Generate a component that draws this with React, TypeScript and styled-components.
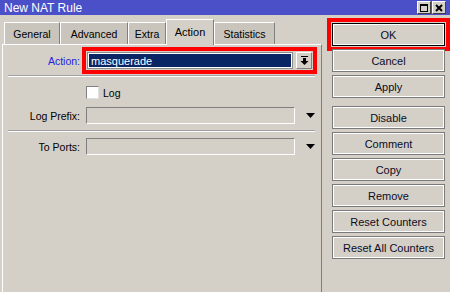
import React from "react";
import styled, { createGlobalStyle } from "styled-components";

const GlobalStyle = createGlobalStyle`
  html, body {
    margin: 0;
    padding: 0;
    background: #d4d0c8;
  }
  body {
    font-family: "Liberation Sans", Arial, sans-serif;
    font-size: 10.5px;
    color: #000;
  }
`;

const Window = styled.div`
  width: 450px;
  height: 292px;
  display: flex;
  flex-direction: column;
  overflow: hidden;
  background: #d4d0c8;
`;

const TitleBar = styled.div`
  height: 15px;
  background: #4b50c8;
  display: flex;
  align-items: center;
  justify-content: space-between;
  padding: 0 4px 0 4px;
`;

const TitleText = styled.span`
  color: #fff;
  font-size: 12px;
`;

const TitleButtons = styled.div`
  display: flex;
  gap: 1px;
  align-self: flex-start;
  margin-top: 1px;
`;

const TitleButton = styled.div`
  width: 12px;
  height: 11px;
  background: #d4d0c8;
  border: 1px solid;
  border-color: #fff #404040 #404040 #fff;
  display: flex;
  align-items: center;
  justify-content: center;
`;

const Body = styled.div`
  flex: 1;
  display: flex;
`;

const LeftColumn = styled.div`
  width: 320px;
  padding-left: 2px;
  display: flex;
  flex-direction: column;
`;

const TabStrip = styled.div`
  height: 29px;
  display: flex;
  align-items: flex-end;
  padding-left: 2px;
  position: relative;
  z-index: 1;
`;

const Tab = styled.div<{ $active?: boolean; $w: number }>`
  width: ${(p) => p.$w}px;
  box-sizing: border-box;
  height: ${(p) => (p.$active ? 26 : 22)}px;
  margin-bottom: ${(p) => (p.$active ? -1 : 0)}px;
  background: ${(p) => (p.$active ? "#d4d0c8" : "#c9c5bd")};
  border-top: 1px solid #fff;
  border-left: 1px solid #fff;
  border-right: 1px solid #808080;
  display: flex;
  align-items: center;
  justify-content: center;
  padding-bottom: ${(p) => (p.$active ? 2 : 0)}px;
  font-size: ${(p) => (p.$active ? 11 : 10.5)}px;
`;

const Panel = styled.div`
  flex: 1;
  border-top: 1px solid #fff;
  border-left: 1px solid #fff;
  border-right: 1px solid #808080;
  display: flex;
  flex-direction: column;
`;

const Row = styled.div<{ $mt: number }>`
  display: grid;
  grid-template-columns: 77px 209px 18px;
  column-gap: 6px;
  align-items: center;
  margin-top: ${(p) => p.$mt}px;
`;

const Label = styled.span<{ $blue?: boolean }>`
  text-align: right;
  color: ${(p) => (p.$blue ? "#2323e0" : "#000")};
  white-space: nowrap;
`;

const Highlight = styled.div`
  grid-column: 2 / span 2;
  width: 227px;
  box-sizing: border-box;
  padding: 1px;
  outline: 4px solid #ff0000;
  display: flex;
  gap: 3px;
`;

const SelectField = styled.div`
  width: 206px;
  height: 17px;
  box-sizing: border-box;
  background: #0a2564;
  border: 1px solid #8c8c8c;
  box-shadow: inset 0 0 0 1px #fff;
  color: #fff;
  display: flex;
  align-items: center;
  padding-left: 3px;
  font-size: 11px;
`;

const DropButton = styled.div`
  width: 16px;
  height: 17px;
  box-sizing: border-box;
  border: 1px solid;
  border-color: #fff #808080 #808080 #fff;
  display: flex;
  align-items: center;
  justify-content: center;
`;

const Input = styled.div`
  height: 17px;
  box-sizing: border-box;
  border: 1px solid;
  border-color: #808080 #fff #fff #808080;
`;

const ArrowCell = styled.div`
  display: flex;
  justify-content: center;
  padding-left: 1px;
`;

const Separator = styled.div<{ $mt: number }>`
  margin: ${(p) => p.$mt}px 0 0 5px;
  width: 307px;
  height: 1px;
  background: #a0a0a0;
  border-bottom: 1px solid #fff;
`;

const CheckLine = styled.label`
  grid-column: 2;
  display: flex;
  align-items: center;
  gap: 4px;
`;

const CheckBox = styled.span`
  width: 13px;
  height: 13px;
  box-sizing: border-box;
  background: #fff;
  border: 1px solid;
  border-color: #808080 #e0e0e0 #e0e0e0 #808080;
`;

const ButtonColumn = styled.div`
  width: 113px;
  padding: 8px 0 0 10px;
  display: flex;
  flex-direction: column;
  gap: 3px;
`;

const Button = styled.div<{ $default?: boolean; $gapBefore?: number }>`
  height: 23px;
  box-sizing: border-box;
  margin-top: ${(p) => p.$gapBefore ?? 0}px;
  border: 1px solid ${(p) => (p.$default ? "#000" : "#7a7a7a")};
  box-shadow: inset 0 0 0 1px #fff;
  display: flex;
  align-items: center;
  justify-content: center;
  outline: ${(p) => (p.$default ? "4px solid #ff0000" : "none")};
  outline-offset: 1px;
  font-size: 11px;
  color: #0c0c24;
`;

const DownTriangle = () => (
  <svg width="9" height="5" viewBox="0 0 9 5">
    <polygon points="0,0 9,0 4.5,5" fill="#000" />
  </svg>
);

const DropIcon = () => (
  <svg width="9" height="9" viewBox="0 0 9 9">
    <rect x="1" y="0" width="7" height="1" fill="#000" />
    <rect x="3" y="2" width="3" height="3" fill="#000" />
    <polygon points="0.5,5 8.5,5 4.5,9" fill="#000" />
  </svg>
);

const tabs = [
  { name: "General", w: 56 },
  { name: "Advanced", w: 68 },
  { name: "Extra", w: 38 },
  { name: "Action", w: 48, active: true },
  { name: "Statistics", w: 61 },
];

const buttons = [
  "Cancel",
  "Apply",
  "Disable",
  "Comment",
  "Copy",
  "Remove",
  "Reset Counters",
  "Reset All Counters",
];

export default function App() {
  return (
    <>
      <GlobalStyle />
      <Window>
        <TitleBar>
          <TitleText>New NAT Rule</TitleText>
          <TitleButtons>
            <TitleButton>
              <svg width="8" height="8" viewBox="0 0 8 8">
                <rect x="0.5" y="0.5" width="7" height="7" fill="none" stroke="#000" />
                <rect x="0" y="0" width="8" height="2" fill="#000" />
              </svg>
            </TitleButton>
            <TitleButton>
              <svg width="8" height="8" viewBox="0 0 8 8">
                <path d="M1 1 L7 7 M7 1 L1 7" stroke="#000" strokeWidth="2" />
              </svg>
            </TitleButton>
          </TitleButtons>
        </TitleBar>
        <Body>
          <LeftColumn>
            <TabStrip>
              {tabs.map((t) => (
                <Tab key={t.name} $w={t.w} $active={t.active}>
                  {t.name}
                </Tab>
              ))}
            </TabStrip>
            <Panel>
              <Row $mt={6}>
                <Label $blue>Action:</Label>
                <Highlight>
                  <SelectField>masquerade</SelectField>
                  <DropButton>
                    <DropIcon />
                  </DropButton>
                </Highlight>
              </Row>
              <Separator $mt={5} />
              <Row $mt={9}>
                <span />
                <CheckLine>
                  <CheckBox />
                  Log
                </CheckLine>
              </Row>
              <Row $mt={8}>
                <Label>Log Prefix:</Label>
                <Input />
                <ArrowCell>
                  <DownTriangle />
                </ArrowCell>
              </Row>
              <Separator $mt={6} />
              <Row $mt={6}>
                <Label>To Ports:</Label>
                <Input />
                <ArrowCell>
                  <DownTriangle />
                </ArrowCell>
              </Row>
            </Panel>
          </LeftColumn>
          <ButtonColumn>
            <Button $default>OK</Button>
            {buttons.map((b) => (
              <Button key={b} $gapBefore={b === "Disable" ? 5 : 0}>
                {b}
              </Button>
            ))}
          </ButtonColumn>
        </Body>
      </Window>
    </>
  );
}
